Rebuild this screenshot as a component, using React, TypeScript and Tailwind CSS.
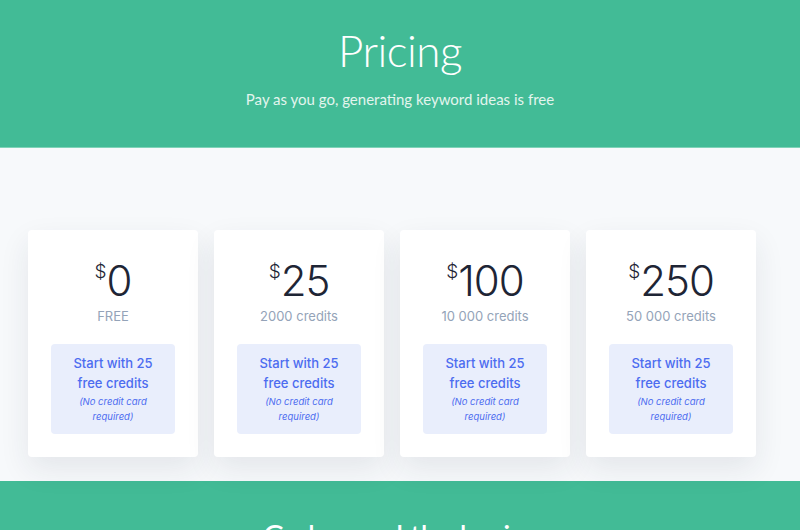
import React from "react";

const plans = [
  { price: "0", note: "FREE" },
  { price: "25", note: "2000 credits" },
  { price: "100", note: "10 000 credits" },
  { price: "250", note: "50 000 credits" },
];

export default function App() {
  return (
    <div className="w-[800px] h-[530px] overflow-hidden bg-[#f7f9fb] font-['Inter',sans-serif]">
      {/* Header */}
      <div className="h-[148px] bg-[#42bb96] flex flex-col items-center pt-[23px] border-b border-[#7fd3b8]">
        <h1 className="text-[44px] leading-[54px] font-light text-white font-['Lato',sans-serif] tracking-[-0.5px]">Pricing</h1>
        <p className="mt-[11px] text-[15px] text-[#e3f5ee] font-['Lato',sans-serif]">
          Pay as you go, generating keyword ideas is free
        </p>
      </div>

      {/* Cards */}
      <div className="flex gap-[16px] pl-[28px] pt-[82px] pb-[24px]">
        {plans.map((p) => (
          <div
            key={p.price}
            className="w-[170px] h-[227px] bg-white rounded-[4px] shadow-[0_12px_30px_rgba(30,40,70,0.09)] flex flex-col items-center px-[23px] pt-[28px]"
          >
            <div className="flex items-start text-[#1e2535]">
              <span className="text-[19px] leading-[20px] mt-[4px] font-light">$</span>
              <span className="text-[42px] leading-[46px] font-light tracking-[-1px]">{p.price}</span>
            </div>
            <div className="mt-[3px] text-[13px] text-[#94a3b8]">{p.note}</div>
            <div className="mt-[17px] w-full h-[90px] rounded-[4px] bg-[#e9eefc] flex flex-col items-center pt-[9px] text-center text-[#4c6cf0]">
              <div className="text-[13px] leading-[20px] font-medium">Start with 25<br />free credits</div>
              <div className="text-[9.5px] leading-[15px] italic mt-[1px]">(No credit card<br />required)</div>
            </div>
          </div>
        ))}
      </div>

      {/* Next section */}
      <div className="h-[60px] bg-[#42bb96] flex justify-center pt-[39px]">
        <h2 className="text-[29px] leading-[30px] font-medium text-white font-['Lato',sans-serif]">Go beyond the basics</h2>
      </div>
    </div>
  );
}
